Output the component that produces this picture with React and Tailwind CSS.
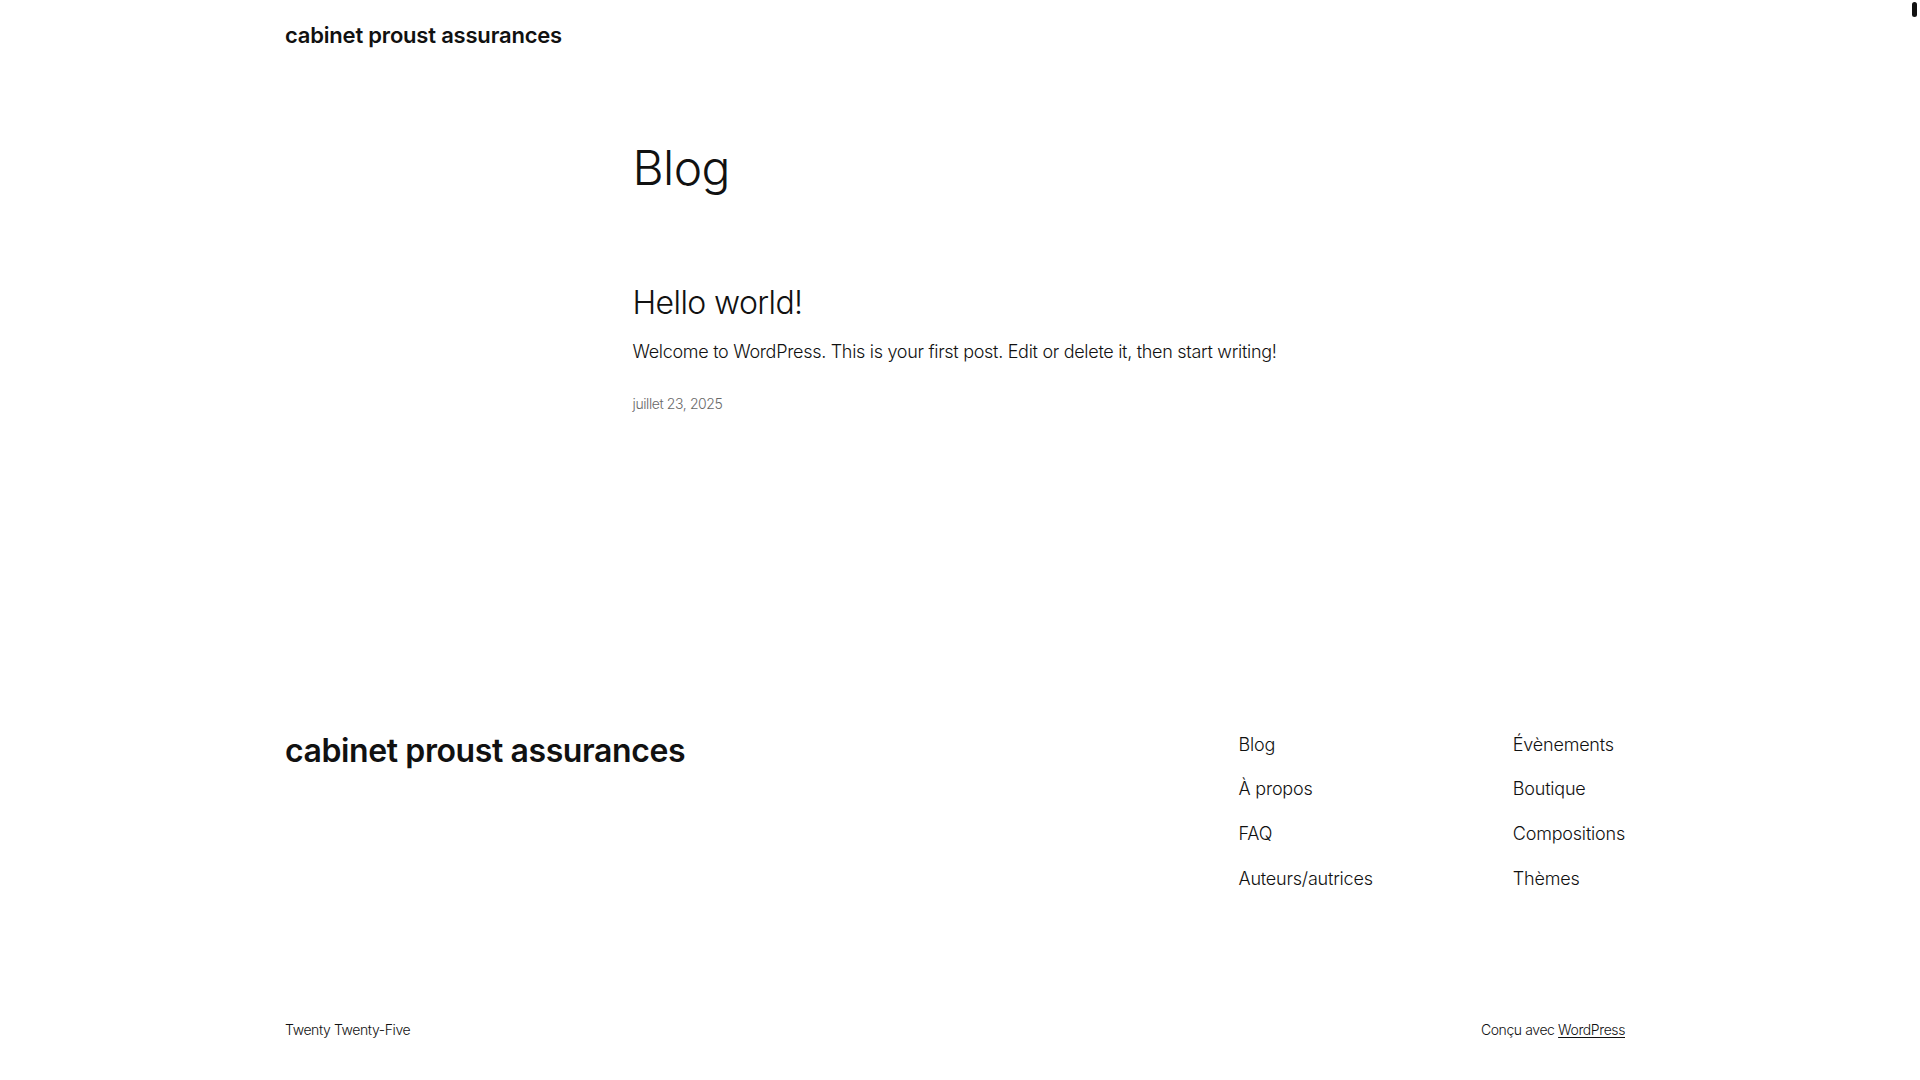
export default function App() {
  const navLeft = ['Blog', 'À propos', 'FAQ', 'Auteurs/autrices'];
  const navRight = ['Évènements', 'Boutique', 'Compositions', 'Thèmes'];

  return (
    <div className="flex min-h-screen w-full bg-white text-[#111111] font-['Inter','Liberation_Sans',sans-serif]">
      <div className="flex-1">
        <header className="mx-auto w-[1340px] pt-[20px]">
          <a href="#" className="text-[22px] leading-[1.4] font-semibold tracking-[-0.2px]">
            cabinet proust assurances
          </a>
        </header>

        <main className="mx-auto w-[645px]">
          <h1 className="mt-[90px] text-[48px] leading-[54px] font-light tracking-[-0.6px]">Blog</h1>

          <article>
            <h2 className="mt-[89px] text-[32px] leading-[1.2] font-light tracking-[-0.6px]">
              <a href="#">Hello world!</a>
            </h2>
            <p className="mt-[16px] whitespace-nowrap text-[18px] leading-[1.6] font-light tracking-[-0.3px]">
              Welcome to WordPress. This is your first post. Edit or delete it, then start writing!
            </p>
            <div className="mt-[27px] text-[14px] leading-[1.4] font-light tracking-[-0.4px] text-[#686868]">
              juillet 23, 2025
            </div>
          </article>
        </main>

        <footer className="mx-auto mt-[318px] w-[1340px]">
          <div className="flex items-start justify-between">
            <a href="#" className="text-[32px] leading-[1.2] font-semibold tracking-[-0.4px]">
              cabinet proust assurances
            </a>
            <div className="flex gap-[140px]">
              <nav className="flex flex-col gap-[19.5px] text-[18px] leading-[1.4] font-light tracking-[-0.2px]">
                {navLeft.map((item) => (
                  <a key={item} href="#">{item}</a>
                ))}
              </nav>
              <nav className="flex flex-col gap-[19.5px] text-[18px] leading-[1.4] font-light tracking-[-0.2px]">
                {navRight.map((item) => (
                  <a key={item} href="#">{item}</a>
                ))}
              </nav>
            </div>
          </div>

          <div className="mt-[129px] flex items-start justify-between text-[14px] leading-[1.4] font-light tracking-[-0.4px]">
            <p>Twenty Twenty-Five</p>
            <p>
              Conçu avec <a href="#" className="underline underline-offset-2">WordPress</a>
            </p>
          </div>
        </footer>
      </div>

      <div className="w-[10px] shrink-0">
        <div className="ml-[2px] mt-[2px] h-[15px] w-[5px] rounded-full bg-[#111111]" />
      </div>
    </div>
  );
}
